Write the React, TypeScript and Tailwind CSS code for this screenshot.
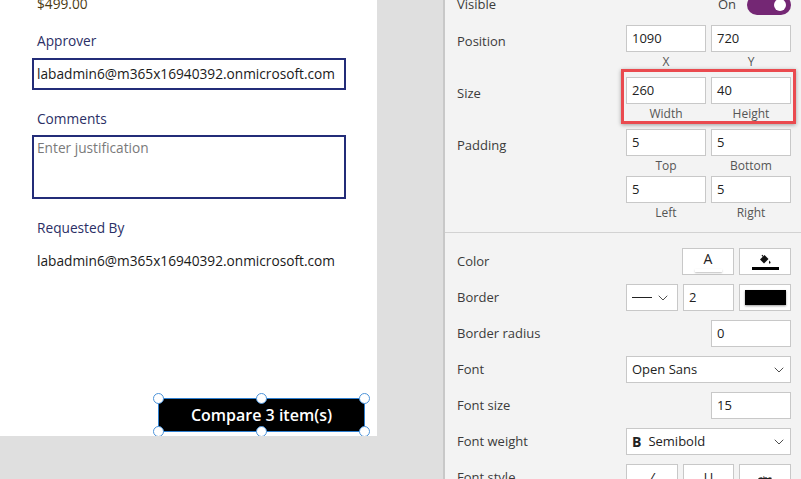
import React from "react";
import { ChevronDown } from "lucide-react";

const Field = ({ value, className = "" }: { value: string; className?: string }) => (
  <div
    className={`h-[27px] bg-white border border-[#c8c8c8] flex items-center pl-[5px] text-[13px] text-[#222] ${className}`}
  >
    {value}
  </div>
);

const PairRow = ({
  label,
  a,
  b,
  sa,
  sb,
  className = "",
  highlight = false,
}: {
  label: string;
  a: string;
  b: string;
  sa: string;
  sb: string;
  className?: string;
  highlight?: boolean;
}) => (
  <div className={`flex justify-between ${className}`}>
    <span className="mt-[6px] h-[20px] leading-[20px]">{label}</span>
    <div className="relative flex gap-[5px]">
      {highlight && (
        <div className="absolute -left-[5px] -right-[5px] -top-[8px] bottom-0 border-[3px] border-[#ea4a4f] shadow-[0_1px_4px_rgba(0,0,0,0.35)]" />
      )}
      {[
        [a, sa],
        [b, sb],
      ].map(([v, s]) => (
        <div key={s} className="w-[80px] flex flex-col">
          <Field value={v} />
          <div className="h-[20px] leading-[20px] text-center text-[12px] text-[#555]">{s}</div>
        </div>
      ))}
    </div>
  </div>
);

const PropRow = ({ label, children }: { label: string; children: React.ReactNode }) => (
  <div className="flex items-center justify-between h-[27px] mb-[9px]">
    <span className="mt-[1px]">{label}</span>
    <div className="flex gap-[5px]">{children}</div>
  </div>
);

const Handle = ({ className }: { className: string }) => (
  <div className={`absolute w-[11px] h-[11px] rounded-full bg-white border-[1.5px] border-[#4d93d9] ${className}`} />
);

const BucketIcon = () => (
  <svg width="14" height="12" viewBox="0 0 14 12">
    <path d="M2 5.5 L6.5 1 L10.5 5 L6 9.5 Z" fill="#111" />
    <path d="M5 2.5 L4 1" stroke="#111" strokeWidth="1.2" />
    <path d="M11.5 6.5 C12.5 8 13 8.8 12 9.6 C11 10 10.5 8.8 11.5 6.5 Z" fill="#111" />
  </svg>
);

export default function App() {
  return (
    <div className="flex w-[801px] h-[479px] overflow-hidden font-['Open_Sans',sans-serif]">
      {/* canvas */}
      <div className="w-[443px] h-full shrink-0 bg-[#dfdfdf]">
        <div className="w-[377px] h-[436px] bg-white overflow-hidden flex flex-col text-[13.7px]">
          <div className="-mt-[6px] ml-[37px] h-[20px] leading-[20px] text-[#4a3a12]">$499.00</div>
          <div className="mt-[17px] ml-[37px] h-[20px] leading-[20px] text-[#2b2f66]">Approver</div>
          <div className="mt-[7px] ml-[32px] w-[314px] h-[32px] border-2 border-[#232c78] flex items-center pl-[3px] text-[#1a1a1a]">
            labadmin6@m365x16940392.onmicrosoft.com
          </div>
          <div className="mt-[19px] ml-[37px] h-[20px] leading-[20px] text-[#2b2f66]">Comments</div>
          <div className="mt-[6px] ml-[32px] w-[314px] h-[64px] border-2 border-[#232c78] pl-[3px] pt-[1px] leading-[20px] text-[#7a7a7a]">
            Enter justification
          </div>
          <div className="mt-[19px] ml-[37px] h-[20px] leading-[20px] text-[#2b2f66]">Requested By</div>
          <div className="mt-[13px] ml-[37px] h-[20px] leading-[20px] text-[#1a1a1a]">
            labadmin6@m365x16940392.onmicrosoft.com
          </div>
          <div className="relative mt-[127px] ml-[158px] w-[207px] h-[34px] shrink-0 bg-black border border-[#2f7fd0] flex items-center justify-center text-white text-[16px] font-semibold">
            Compare 3 item(s)
            <Handle className="-left-[6px] -top-[6px]" />
            <Handle className="left-[97px] -top-[6px]" />
            <Handle className="-right-[6px] -top-[6px]" />
            <Handle className="-left-[6px] -bottom-[6px]" />
            <Handle className="left-[97px] -bottom-[6px]" />
            <Handle className="-right-[6px] -bottom-[6px]" />
          </div>
        </div>
      </div>

      {/* properties panel */}
      <div className="flex-1 h-full bg-[#f3f3f3] border-l-2 border-[#c8c8c8] overflow-hidden text-[13px] text-[#3b3b3b]">
        <div className="-mt-[8px] pl-[12px] pr-[10px]">
          <div className="flex h-[26px] items-center justify-between">
            <span>Visible</span>
            <div className="flex items-center gap-[11px]">
              <span className="text-[#444]">On</span>
              <div className="w-[44px] h-[20px] rounded-full bg-[#742774] flex items-center justify-end pr-[5px]">
                <div className="w-[12px] h-[12px] rounded-full bg-white" />
              </div>
            </div>
          </div>

          <PairRow label="Position" a="1090" b="720" sa="X" sb="Y" className="mt-[7px]" />
          <PairRow label="Size" a="260" b="40" sa="Width" sb="Height" className="mt-[5px]" highlight />
          <PairRow label="Padding" a="5" b="5" sa="Top" sb="Bottom" className="mt-[5px]" />
          <div className="flex justify-end">
            <div className="flex gap-[5px]">
              {[
                ["5", "Left"],
                ["5", "Right"],
              ].map(([v, s]) => (
                <div key={s} className="w-[80px] flex flex-col">
                  <Field value={v} />
                  <div className="h-[20px] leading-[20px] text-center text-[12px] text-[#555]">{s}</div>
                </div>
              ))}
            </div>
          </div>
        </div>

        <div className="mt-[9px] h-px bg-[#d2d2d2]" />

        <div className="mt-[15px] pl-[12px] pr-[10px]">
          <PropRow label="Color">
            <div className="w-[52px] h-[27px] bg-white border border-[#c8c8c8] flex flex-col items-center justify-center">
              <span className="text-[14px] leading-[14px] text-[#222]">A</span>
              <div className="mt-[3px] w-[27px] h-[3px] bg-white shadow-[0_1px_2px_rgba(0,0,0,0.25)]" />
            </div>
            <div className="w-[52px] h-[27px] bg-white border border-[#c8c8c8] flex flex-col items-center justify-center">
              <BucketIcon />
              <div className="mt-[1px] w-[27px] h-[3px] bg-black" />
            </div>
          </PropRow>
          <PropRow label="Border">
            <div className="w-[52px] h-[27px] bg-white border border-[#c8c8c8] flex items-center pl-[5px] gap-[3px]">
              <div className="w-[20px] h-px bg-[#222]" />
              <ChevronDown size={16} strokeWidth={1.3} className="text-[#333]" />
            </div>
            <Field value="2" className="w-[51px]" />
            <div className="w-[52px] h-[27px] bg-white border border-[#c8c8c8] flex items-center justify-center">
              <div className="w-[41px] h-[15px] bg-black shadow-[0_1px_2px_rgba(0,0,0,0.4)]" />
            </div>
          </PropRow>
          <PropRow label="Border radius">
            <Field value="0" className="w-[80px]" />
          </PropRow>
          <PropRow label="Font">
            <div className="w-[165px] h-[27px] bg-white border border-[#c8c8c8] flex items-center justify-between pl-[5px] pr-[3px] text-[#222]">
              <span>Open Sans</span>
              <ChevronDown size={16} strokeWidth={1.3} className="text-[#333]" />
            </div>
          </PropRow>
          <PropRow label="Font size">
            <Field value="15" className="w-[80px]" />
          </PropRow>
          <PropRow label="Font weight">
            <div className="w-[165px] h-[27px] bg-white border border-[#c8c8c8] flex items-center justify-between pl-[5px] pr-[3px] text-[#222]">
              <span className="flex items-center gap-[7px]">
                <b className="text-[14px] font-bold">B</b>
                <span>Semibold</span>
              </span>
              <ChevronDown size={16} strokeWidth={1.3} className="text-[#333]" />
            </div>
          </PropRow>
          <PropRow label="Font style">
            <div className="w-[52px] h-[27px] bg-white border border-[#c8c8c8] flex items-center justify-center italic text-[#222]">/</div>
            <div className="w-[51px] h-[27px] bg-white border border-[#c8c8c8] flex items-center justify-center underline text-[#222]">U</div>
            <div className="w-[52px] h-[27px] bg-white border border-[#c8c8c8] flex items-center justify-center line-through text-[8px] text-[#222]">abc</div>
          </PropRow>
        </div>
      </div>
    </div>
  );
}
